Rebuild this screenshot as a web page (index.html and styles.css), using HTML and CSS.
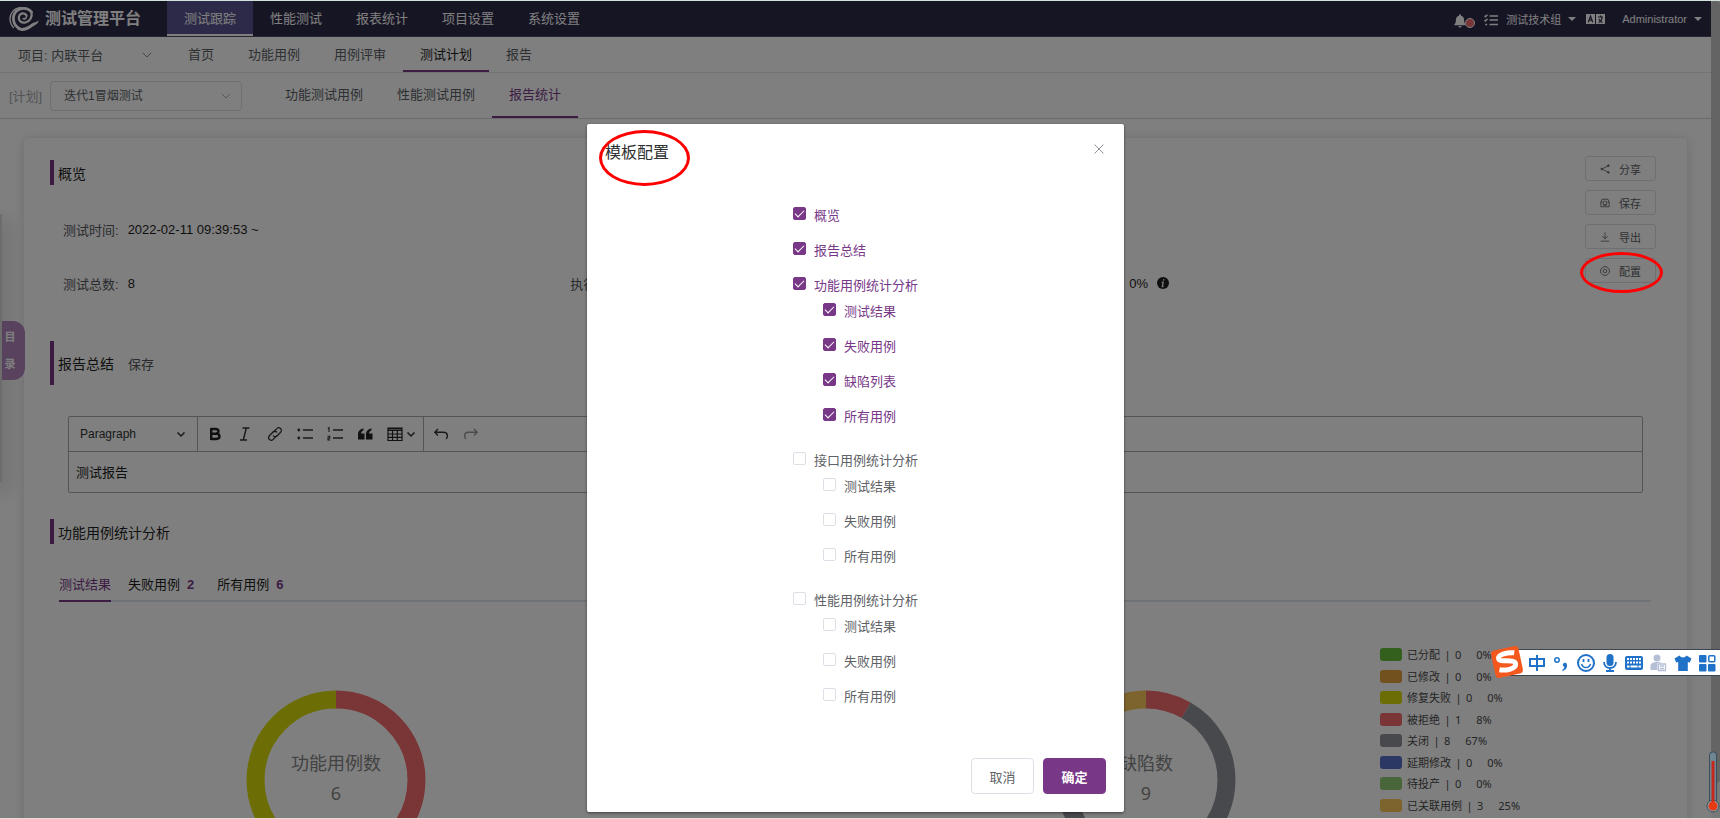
FILE: index.html
```html
<!DOCTYPE html>
<html lang="zh-CN">
<head>
<meta charset="utf-8">
<title>测试管理平台</title>
<link rel="stylesheet" href="styles.css">
</head>
<body>
<div class="page">
  <header class="topbar">
    <a class="brand" href="#">
      <svg class="brand-logo" viewBox="0 0 30 26" width="30" height="26" fill="none" stroke="#fff" stroke-linecap="round">
        <path d="M12 1.500C5 2 .8 7.500 1 13.500C1.200 17 2.500 19.500 4.500 21.500" stroke-width="1.300"/>
        <path d="M22.500 6C19 1.500 11 1 7 5.500C2.500 10.500 4 19.500 10.500 22.500" stroke-width="2.800"/>
        <path d="M17.500 9.500C16 6 11 7 10 10.500C9 14.500 12.500 17.500 16.500 16.500C21 15.300 23.500 11 22.500 6" stroke-width="2.200"/>
        <path d="M14.200 12.600C15.500 13.400 17.500 12.400 17.700 10" stroke-width="1.600"/>
        <path d="M8.500 21C14 23.500 19 20.500 22.500 17.800C25 16 27.500 16.300 29.800 14.500C28.800 18 26.500 18.600 24.200 20.300C19.500 24 14.500 26.800 8.500 23.500Z" fill="#fff" stroke="none"/>
      </svg>
      <span>测试管理平台</span>
    </a>
    <nav class="main-nav">
      <a class="main-tab active" href="#">测试跟踪</a>
      <a class="main-tab" href="#">性能测试</a>
      <a class="main-tab" href="#">报表统计</a>
      <a class="main-tab" href="#">项目设置</a>
      <a class="main-tab" href="#">系统设置</a>
    </nav>
    <div class="user-area">
      <button class="bell" aria-label="通知">
        <svg viewBox="0 0 12 14" width="12" height="14" fill="#fff"><path d="M6 .3a1 1 0 0 1 1 1v.5c2 .5 3.100 2.200 3.100 4.200 0 2.600.7 3.600 1.600 4.500v.8H.3v-.8C1.200 9.600 1.900 8.600 1.900 6c0-2 1.100-3.700 3.100-4.200v-.5a1 1 0 0 1 1-1zM4.500 12h3a1.500 1.500 0 0 1-3 0z"/></svg>
        <i class="bell-dot"></i>
      </button>
      <button class="tasks" aria-label="任务">
        <svg viewBox="0 0 14 12" width="14" height="12" fill="none" stroke="#fff" stroke-width="1.400"><path d="M5.500 2H14M5.500 6H14M5.500 10.500H14M.5 1.800l1 1 2-2.200M.5 5.900l1 1 2-2.200M1.200 10.500h2"/></svg>
      </button>
      <button class="menu-btn">测试技术组<i class="caret"></i></button>
      <button class="lang" aria-label="语言">
        <svg viewBox="0 0 19 10" width="19" height="10"><path fill="#fff" d="M0 0h9v10H0zM10 0h9v10h-9z"/><path fill="none" stroke="#2c2a48" stroke-width="1.200" d="M2.300 8.200 4.500 2 6.700 8.200M3 6.200h3M12 3h5M14.500 1.500V3M12.500 8.500C15 7.500 16 5.500 16 3M13 5c.7 1.700 2 3 3.500 3.500"/></svg>
      </button>
      <button class="menu-btn">Administrator<i class="caret"></i></button>
    </div>
  </header>

  <nav class="subbar">
    <button class="project">项目: 内联平台
      <svg viewBox="0 0 10 6" width="10" height="6" fill="none" stroke="#8a8d94"><path d="M.8.800 5 5 9.200.8"/></svg>
    </button>
    <a class="sub-tab" href="#">首页</a>
    <a class="sub-tab" href="#">功能用例</a>
    <a class="sub-tab" href="#">用例评审</a>
    <a class="sub-tab current" href="#">测试计划</a>
    <a class="sub-tab" href="#">报告</a>
  </nav>

  <div class="planbar">
    <label class="plan-label" for="plan">[计划]</label>
    <div class="plan-select">
      <select id="plan"><option>迭代1冒烟测试</option></select>
      <svg viewBox="0 0 10 6" width="10" height="6" fill="none" stroke="#a8abb2"><path d="M.8.800 5 5 9.200.8"/></svg>
    </div>
    <nav class="plan-tabs">
      <a class="sub-tab" href="#">功能测试用例</a>
      <a class="sub-tab" href="#">性能测试用例</a>
      <a class="sub-tab chosen" href="#">报告统计</a>
    </nav>
  </div>

  <main class="card">
    <section class="overview">
      <div class="overview-main">
        <h2 class="section-title">概览</h2>
        <dl class="facts">
          <div class="fact"><dt>测试时间:</dt><dd>2022-02-11 09:39:53 ~</dd></div>
          <div class="fact start"><dt>测试总数:</dt><dd>8</dd></div>
          <div class="fact"><dt>执行人:</dt><dd></dd></div>
          <div class="fact"><dt>通过率:</dt><dd>0%
            <svg class="info" viewBox="0 0 12 12" width="12" height="12"><circle cx="6" cy="6" r="6" fill="#1c1c1c"/><path d="M6.800 2.200 6.600 3.600M6.300 5 5.400 9.400M4.600 5.200h1.600M4.700 9.500h1.800" stroke="#fff" stroke-width="1.300" fill="none"/></svg>
          </dd></div>
        </dl>
      </div>
      <div class="actions">
        <button class="action">
          <svg viewBox="0 0 12 12" width="10" height="10" fill="#606266" stroke="#606266"><path d="M10 2 2.500 6 10 10" fill="none"/><circle cx="10" cy="2" r="1"/><circle cx="2" cy="6" r="1"/><circle cx="10" cy="10" r="1"/></svg>分享</button>
        <button class="action">
          <svg viewBox="0 0 12 12" width="10" height="10" fill="none" stroke="#606266"><path d="M1 5 2.500 1.500h7L11 5v5.500H1zM1 5h2M9 5h2"/><circle cx="6" cy="6" r="2.300"/><path d="M3.500 8.500h5"/></svg>保存</button>
        <button class="action">
          <svg viewBox="0 0 12 12" width="10" height="10" fill="none" stroke="#606266"><path d="M6 .5V8M2.800 5 6 8.200 9.200 5M.8 11h10.400"/></svg>导出</button>
        <button class="action">
          <svg viewBox="0 0 12 12" width="10" height="10" fill="none" stroke="#606266"><path d="M4 .8h4l1 1.500L11.300 4v4L9 9.700 8 11.200H4L3 9.700.7 8V4L3 2.300z"/><circle cx="6" cy="6" r="2.200"/></svg>配置</button>
      </div>
    </section>

    <h2 class="section-title tall">报告总结<button class="save-link">保存</button></h2>

    <div class="editor">
      <div class="toolbar">
        <button class="heading-pick">Paragraph
          <svg viewBox="0 0 10 10" width="10" height="10" fill="none" stroke="#333" stroke-width="1.500"><path d="M1.500 3.500 5 7l3.500-3.500"/></svg>
        </button>
        <div class="tools">
          <button class="tool" aria-label="粗体"><svg viewBox="0 0 16 16" width="16" height="16" fill="none" stroke="#222" stroke-width="2.400"><path d="M4.200 2v12M4 3h4.500c4 0 4 4.700 0 4.700H4.500h4.700c4.400 0 4.400 5.300 0 5.300H4"/></svg></button>
          <button class="tool" aria-label="斜体"><svg viewBox="0 0 16 16" width="16" height="16" fill="none" stroke="#333" stroke-width="1.400"><path d="M5.500 2h7M3 14h7M9.300 2 6.300 14"/></svg></button>
          <button class="tool" aria-label="链接"><svg viewBox="0 0 16 16" width="16" height="16" fill="none" stroke="#333" stroke-width="1.300" stroke-linecap="round"><path d="M6.200 6.200 9.800 2.600a2.500 2.500 0 0 1 3.800 3.600L10 10a2.500 2.500 0 0 1-3.700-.1M9.800 9.800 6.200 13.400a2.500 2.500 0 0 1-3.800-3.600L6 6a2.500 2.500 0 0 1 3.700.1"/></svg></button>
          <button class="tool" aria-label="项目列表"><svg viewBox="0 0 16 16" width="16" height="16" stroke="#333" stroke-width="1.400"><circle cx="1.800" cy="4" r="1.400" fill="#333" stroke="none"/><circle cx="1.800" cy="12" r="1.400" fill="#333" stroke="none"/><path d="M6 4h10M6 12h10"/></svg></button>
          <button class="tool" aria-label="编号列表"><svg viewBox="0 0 16 16" width="16" height="16" fill="none" stroke="#333" stroke-width="1.400"><path d="M6 4h10M6 12h10"/><path d="M.8 2.500 2 1.800V6M.5 10.300h2.200v1.800H1V14h2.200" stroke-width="1.100"/></svg></button>
          <button class="tool" aria-label="引用"><svg viewBox="0 0 16 16" width="16" height="16" fill="#222"><path d="M1 13.500V9c0-3.500 1.500-5.800 5.500-6.500v1.800C5 5 4.200 6 4 7.500h3.500v6zM9 13.500V9c0-3.500 1.500-5.800 5.500-6.500v1.800C13 5 12.200 6 12 7.500h3.500v6z"/></svg></button>
          <button class="tool table-tool" aria-label="表格"><svg viewBox="0 0 16 16" width="16" height="16" fill="none" stroke="#222" stroke-width="1.200"><path d="M1 2h14v12.500H1zM1 3h14M1 4.500h14M1 8h14M1 11.300h14M5.500 4.500v10M10.300 4.500v10"/></svg><svg viewBox="0 0 10 10" width="10" height="10" fill="none" stroke="#333" stroke-width="1.500"><path d="M1.500 3.500 5 7l3.500-3.500"/></svg></button>
        </div>
        <div class="tools history">
          <button class="tool" aria-label="撤销"><svg viewBox="0 0 16 16" width="16" height="16" fill="none" stroke="#333" stroke-width="1.400"><path d="M5 3 1.800 6.300 5 9.600M2 6.300h8.500c4.500 0 4.800 4.500 2.700 6.700"/></svg></button>
          <button class="tool" aria-label="重做"><svg viewBox="0 0 16 16" width="16" height="16" fill="none" stroke="#999" stroke-width="1.400"><path d="M11 3l3.200 3.300L11 9.600M14 6.300H5.500C1 6.300.7 10.800 2.800 13"/></svg></button>
        </div>
      </div>
      <div class="editor-body" contenteditable="true">测试报告</div>
    </div>

    <h2 class="section-title">功能用例统计分析</h2>
    <div class="result-tabs">
      <button class="result-tab on">测试结果</button>
      <button class="result-tab">失败用例<b>2</b></button>
      <button class="result-tab">所有用例<b>6</b></button>
    </div>

    <div class="charts">
      <div class="chart">
        <svg class="donut" viewBox="0 0 180 180" width="180" height="180">
          <g fill="none" stroke-width="18" transform="rotate(-90 90 90)">
            <circle cx="90" cy="90" r="80.500" pathLength="360" stroke="#f56c6c" stroke-dasharray="180 180"/>
            <circle cx="90" cy="90" r="80.500" pathLength="360" stroke="#dbdb0c" stroke-dasharray="180 180" stroke-dashoffset="-180"/>
          </g>
          <text class="donut-text" x="90" y="80">功能用例数</text>
          <text class="donut-text" x="90" y="110">6</text>
        </svg>
        <div class="legend short"><i class="swatch yellow"></i></div>
      </div>
      <div class="chart">
        <svg class="donut" viewBox="0 0 180 180" width="180" height="180">
          <g fill="none" stroke-width="18" transform="rotate(-90 90 90)">
            <circle cx="90" cy="90" r="80.500" pathLength="360" stroke="#f56c6c" stroke-dasharray="30 330"/>
            <circle cx="90" cy="90" r="80.500" pathLength="360" stroke="#909399" stroke-dasharray="240 120" stroke-dashoffset="-30"/>
            <circle cx="90" cy="90" r="80.500" pathLength="360" stroke="#fac858" stroke-dasharray="90 270" stroke-dashoffset="-270"/>
          </g>
          <text class="donut-text" x="90" y="80">缺陷数</text>
          <text class="donut-text" x="90" y="110">9</text>
        </svg>
        <ul class="legend">
          <li><i class="swatch green"></i>已分配<i class="bar">|</i>0<span class="pct">0%</span></li>
          <li><i class="swatch orange"></i>已修改<i class="bar">|</i>0<span class="pct">0%</span></li>
          <li><i class="swatch yellow"></i>修复失败<i class="bar">|</i>0<span class="pct">0%</span></li>
          <li><i class="swatch red"></i>被拒绝<i class="bar">|</i>1<span class="pct">8%</span></li>
          <li><i class="swatch gray"></i>关闭<i class="bar">|</i>8<span class="pct">67%</span></li>
          <li><i class="swatch blue"></i>延期修改<i class="bar">|</i>0<span class="pct">0%</span></li>
          <li><i class="swatch lime"></i>待投产<i class="bar">|</i>0<span class="pct">0%</span></li>
          <li><i class="swatch gold"></i>已关联用例<i class="bar">|</i>3<span class="pct">25%</span></li>
        </ul>
      </div>
    </div>
  </main>
</div>

<aside class="drawer-edge"></aside>
<button class="catalog">目<br>录</button>
<div class="scroll-track"><div class="scroll-thumb"></div></div>

<div class="mask">
  <form class="dialog" role="dialog" aria-labelledby="dialog-title">
    <div class="dialog-head">
      <h1 id="dialog-title">模板配置</h1>
      <button type="button" class="close" aria-label="关闭"><svg viewBox="0 0 10 10" width="10" height="10" stroke="#909399"><path d="M.5.500l9 9M9.500.500l-9 9"/></svg></button>
    </div>
    <ul class="tree">
      <li><label class="check"><input type="checkbox" checked>概览</label></li>
      <li><label class="check"><input type="checkbox" checked>报告总结</label></li>
      <li><label class="check"><input type="checkbox" checked>功能用例统计分析</label>
        <ul class="branch">
          <li><label class="check"><input type="checkbox" checked>测试结果</label></li>
          <li><label class="check"><input type="checkbox" checked>失败用例</label></li>
          <li><label class="check"><input type="checkbox" checked>缺陷列表</label></li>
          <li><label class="check"><input type="checkbox" checked>所有用例</label></li>
        </ul>
      </li>
      <li><label class="check"><input type="checkbox">接口用例统计分析</label>
        <ul class="branch">
          <li><label class="check"><input type="checkbox">测试结果</label></li>
          <li><label class="check"><input type="checkbox">失败用例</label></li>
          <li><label class="check"><input type="checkbox">所有用例</label></li>
        </ul>
      </li>
      <li><label class="check"><input type="checkbox">性能用例统计分析</label>
        <ul class="branch">
          <li><label class="check"><input type="checkbox">测试结果</label></li>
          <li><label class="check"><input type="checkbox">失败用例</label></li>
          <li><label class="check"><input type="checkbox">所有用例</label></li>
        </ul>
      </li>
    </ul>
    <div class="dialog-foot">
      <button type="button" class="btn">取消</button>
      <button type="button" class="btn primary">确定</button>
    </div>
    <i class="ring ring-title"></i>
  </form>
</div>
<i class="ring ring-config"></i>

<div class="ime">
  <svg class="ime-logo" viewBox="0 0 34 34" width="34" height="34">
    <g transform="rotate(-12 17 17)"><rect x="3" y="3" width="28" height="28" rx="4" fill="#f4581c"/><path d="M26 9.500C20 7.500 9.500 7.500 9.500 12C9.500 16.500 25 15 25 20.500C25 25.500 14 25.500 8 23" fill="none" stroke="#fff" stroke-width="5"/></g>
  </svg>
  <div class="ime-icons">
    <svg viewBox="0 0 18 18" width="18" height="18" fill="none" stroke="#2072c8" stroke-width="2"><path d="M2 5h14v7H2zM9 1v16"/></svg>
    <svg viewBox="0 0 18 18" width="18" height="18"><circle cx="5" cy="6" r="2.200" fill="none" stroke="#2072c8" stroke-width="1.500"/><path d="M10 16c2-1 2.500-2 2.200-3.200A2.100 2.100 0 1 1 15 11c.4 2.500-1.500 5.200-4.300 6z" fill="#2072c8"/></svg>
    <svg viewBox="0 0 18 18" width="18" height="18" fill="none" stroke="#2072c8" stroke-width="2"><circle cx="9" cy="9" r="8"/><path d="M4.500 10c1.500 4.800 7.500 4.800 9 0" stroke-width="1.500"/><path d="M6.500 5v3M11.500 5v3" stroke-width="1.800"/></svg>
    <svg viewBox="0 0 18 18" width="18" height="18"><rect x="5.500" y="0" width="7" height="12" rx="3.500" fill="#2072c8"/><path d="M3 8c0 8 12 8 12 0M9 13.500V17M5 17h8" fill="none" stroke="#2072c8" stroke-width="1.800"/></svg>
    <svg viewBox="0 0 18 18" width="18" height="18"><rect x="0" y="2" width="18" height="14" rx="2" fill="#2072c8"/><path d="M2 5h14M2 8.500h14" stroke="#fff" stroke-width="2" stroke-dasharray="2 1"/><path d="M2 12.500h2.500M5.500 12.500h7M13.500 12.500H16" stroke="#fff" stroke-width="1.800"/></svg>
    <svg viewBox="0 0 18 18" width="18" height="18" fill="#b5c0d6"><circle cx="8" cy="4" r="3.500"/><path d="M1.500 16V12c0-3 3-4 6.500-4 2 0 3.500.3 4.500 1H8.500v7z"/><path d="M9.500 10h7v6.500h-7zM11 12h4M11 14.500h4" fill="#fff" stroke="#b5c0d6" stroke-width="1.300"/></svg>
    <svg viewBox="0 0 18 18" width="18" height="18" fill="#2072c8"><path d="M5.500 1.500C7 4 11 4 12.500 1.500L17.500 4.500 15.800 8.500 13.800 8V17H4.200V8l-2 .5L.5 4.500z"/></svg>
    <svg viewBox="0 0 18 18" width="18" height="18" fill="#2072c8"><rect x="1" y="1" width="7.500" height="7.500" rx="1"/><rect x="1" y="10" width="7.500" height="7.500" rx="1"/><rect x="10" y="10" width="7.500" height="7.500" rx="1"/><rect x="10.800" y="1.800" width="6" height="6" rx="1" fill="none" stroke="#2072c8" stroke-width="1.500"/></svg>
  </div>
</div>
<svg class="thermo" viewBox="0 0 14 62" width="14" height="62">
  <rect x="3.500" y="1" width="7" height="54" rx="3" fill="#6e8593" stroke="#3e4e58"/>
  <circle cx="7" cy="55" r="6" fill="#8fa0aa" stroke="#3e4e58"/>
  <rect x="5.500" y="10" width="3" height="44" fill="#c8281c"/>
  <circle cx="7" cy="55" r="4.500" fill="#e63a12"/>
</svg>
</body>
</html>
```

FILE: styles.css
```css
* { box-sizing: border-box; }

body {
  margin: 0;
  height: 100vh;
  overflow: hidden;
  position: relative;
  background: #f0dcd6;
  border-top: 1px solid #d4e2dc;
  font-family: "Liberation Sans", "Noto Sans CJK SC", sans-serif;
  font-size: 13px;
  color: #303133;
}

h1, h2, ul, dl, dd { margin: 0; padding: 0; font-weight: 400; }
ul { list-style: none; }
a { color: inherit; text-decoration: none; }
i { font-style: normal; }
svg { flex: none; }
button, select {
  font: inherit;
  color: inherit;
  background: none;
  border: 0;
  padding: 0;
  margin: 0;
}

.page {
  height: calc(100vh - 2px);
  overflow: hidden;
  padding-right: 9px;
  background: #fff;
}

/* top bar */
.topbar {
  display: flex;
  height: 36px;
  background: #2c2a48;
  border-bottom: 1px solid #4a4a68;
  color: #fff;
}
.brand {
  display: flex;
  align-items: center;
  gap: 6px;
  width: 167px;
  padding-left: 9px;
  font-size: 16px;
  font-weight: 700;
}
.brand span { padding-bottom: 4px; }
.main-nav { display: flex; }
.main-tab {
  display: flex;
  align-items: center;
  padding: 0 17px;
  border-bottom: 2px solid transparent;
}
.main-tab.active { background: #595591; border-color: #fff; }
.user-area {
  display: flex;
  align-items: center;
  margin-left: auto;
  padding-right: 9px;
  font-size: 11px;
}
.bell { position: relative; height: 14px; margin: 5px 18px 0 0; }
.bell svg { display: block; }
.bell-dot {
  position: absolute;
  left: 11px;
  top: 4px;
  width: 10px;
  height: 10px;
  border: 1px solid #fff;
  border-radius: 50%;
  background: #f56c6c;
}
.tasks { margin-right: 8px; padding-top: 3px; }
.menu-btn { display: flex; align-items: center; gap: 7px; }
.caret { border: 4px solid transparent; border-top-color: #fff; border-bottom: 0; }
.lang { margin: 0 17px 0 10px; }
.lang svg, .tasks svg { display: block; }

/* project bar */
.subbar {
  display: flex;
  height: 36px;
  border-bottom: 1px solid #e6e6e6;
  color: #5c5f66;
}
.project {
  display: flex;
  align-items: center;
  justify-content: space-between;
  width: 171px;
  padding: 0 19px 0 18px;
}
.sub-tab {
  display: flex;
  align-items: center;
  padding: 0 17px;
  border-bottom: 2px solid transparent;
}
.sub-tab.current { color: #1d1e20; border-color: #783887; }
.sub-tab.chosen { color: #783887; border-color: #783887; }

/* plan bar */
.planbar {
  display: flex;
  align-items: center;
  height: 46px;
  padding-left: 9px;
  border-bottom: 1px solid #d4d4d4;
  color: #5c5f66;
}
.plan-label { width: 41px; color: #a5a8ae; }
.plan-select {
  display: flex;
  align-items: center;
  width: 192px;
  height: 30px;
  padding: 0 10px 0 13px;
  border: 1px solid #dcdfe6;
  border-radius: 4px;
}
.plan-select select { flex: 1; appearance: none; outline: 0; font-size: 12px; }
.plan-tabs { display: flex; align-self: stretch; margin-left: 26px; }
.plan-tabs .sub-tab { padding-bottom: 2px; }

/* report card */
.card {
  margin: 18px 23px 0;
  height: 900px;
  padding-top: 18px;
  border: 1px solid #ebeef5;
  border-radius: 4px;
  box-shadow: 0 2px 12px rgba(0, 0, 0, .12);
}
.overview { display: flex; padding: 0 31px 0 26px; }
.overview-main { flex: 1; padding-top: 4px; }
.overview .section-title { margin-left: 0; }
.section-title {
  display: flex;
  align-items: center;
  height: 25px;
  margin-left: 26px;
  padding-left: 4px;
  border-left: 4px solid #783887;
  font-size: 14px;
  color: #1d1e20;
}
.section-title.tall { height: 44px; margin-top: 48px; }
.save-link { margin-left: 14px; font-size: 13px; color: #55585e; }
.facts {
  display: grid;
  grid-template-columns: 1fr 1fr 1fr;
  row-gap: 34px;
  padding: 34px 0 0 13px;
}
.fact { display: flex; align-items: center; gap: 9px; height: 20px; }
.fact dt { color: #55585e; }
.fact dd { display: flex; align-items: center; gap: 9px; color: #1d1e20; }
.fact.start { grid-column: 1; }
.actions { display: flex; flex-direction: column; gap: 9px; }
.action {
  display: flex;
  align-items: center;
  justify-content: center;
  gap: 9px;
  width: 71px;
  height: 25px;
  border: 1px solid #dcdfe6;
  border-radius: 3px;
  font-size: 11px;
  color: #606266;
}

/* editor */
.editor {
  margin: 31px 44px 26px;
  border: 1px solid #aaa;
  border-radius: 2px;
}
.toolbar { display: flex; height: 35px; border-bottom: 1px solid #aaa; }
.heading-pick {
  display: flex;
  align-items: center;
  justify-content: space-between;
  width: 129px;
  padding: 0 11px;
  border-right: 1px solid #aaa;
  font-size: 12px;
}
.tools { display: flex; align-items: center; gap: 14px; padding: 0 7px 0 9px; border-right: 1px solid #aaa; }
.tools.history { border-right: 0; }
.tool { display: flex; align-items: center; }
.table-tool { gap: 3px; }
.editor-body { height: 40px; padding: 0 7px; line-height: 42px; color: #1d1e20; outline: 0; }

/* result tabs */
.result-tabs {
  display: flex;
  gap: 17px;
  margin: 22px 36px 0 35px;
  border-bottom: 2px solid #dfe4ed;
}
.result-tab {
  height: 36px;
  margin-bottom: -2px;
  border-bottom: 2px solid transparent;
  color: #1d1e20;
}
.result-tab.on { color: #783887; border-color: #783887; }
.result-tab b { margin: 0 6px 0 7px; color: #783887; }

/* charts */
.charts {
  display: grid;
  grid-template-columns: 1fr 1fr;
  column-gap: 28px;
  margin: 46px 36px 0 35px;
}
.chart { display: flex; padding-left: 187px; }
.donut { margin-top: 42px; }
.donut-text {
  font-family: "Noto Sans", "Noto Sans CJK SC", sans-serif;
  font-size: 18px;
  text-anchor: middle;
  fill: #868686;
}
.legend {
  display: grid;
  grid-auto-rows: 13px;
  height: 164px;
  align-content: space-between;
  margin-left: 144px;
  font-family: "Noto Sans", "Noto Sans CJK SC", sans-serif;
  font-size: 11px;
  line-height: 13px;
  color: #4a4a4a;
}
.legend.short { margin-left: 167px; align-content: end; }
.legend li { display: flex; align-items: center; }
.swatch { width: 22px; height: 13px; margin-right: 5px; border-radius: 3px; }
.bar { width: 15px; text-align: center; }
.pct { margin-left: 15px; }
.green { background: #67c23a; }
.orange { background: #e6a23c; }
.yellow { background: #dbdb0c; }
.red { background: #f56c6c; }
.gray { background: #909399; }
.blue { background: #5470c6; }
.lime { background: #91cc75; }
.gold { background: #fac858; }

/* side drawer and scrollbar */
.drawer-edge {
  position: absolute;
  left: 0;
  top: 213px;
  width: 2px;
  height: 268px;
  background: #d8d8d8;
  box-shadow: 0 8px 20px 4px rgba(0, 0, 0, .2);
}
.catalog {
  position: absolute;
  left: 2px;
  top: 320px;
  width: 23px;
  height: 59px;
  padding-right: 7px;
  border-radius: 0 12px 12px 0;
  background: #b085bb;
  color: #fff;
  font-size: 11px;
  font-weight: 700;
  line-height: 27px;
}
.scroll-track {
  position: absolute;
  right: 0;
  top: 0;
  bottom: 1px;
  width: 9px;
  background: #f1f1f1;
}
.scroll-thumb { height: 782px; border-radius: 4px; background: #c8c8c8; }

/* dialog */
.mask {
  position: absolute;
  inset: 0 0 1px;
  padding: 123px 9px 0 0;
  background: rgba(0, 0, 0, .5);
}
.dialog {
  position: relative;
  width: 537px;
  margin: 0 auto;
  padding: 18px;
  border-radius: 2px;
  background: #fff;
  box-shadow: 0 1px 3px rgba(0, 0, 0, .5);
}
.dialog-head { display: flex; align-items: flex-start; justify-content: space-between; height: 59px; }
.dialog-head h1 { font-size: 16px; line-height: 22px; color: #303133; }
.close { display: flex; padding: 2px; }
.tree { display: grid; row-gap: 9px; padding-left: 188px; }
.branch { display: grid; row-gap: 9px; padding: 0 0 9px 30px; }
.check { display: flex; align-items: flex-start; height: 26px; line-height: 29px; color: #606266; }
.check:has(input:checked) { color: #783887; }
.check input {
  appearance: none;
  display: grid;
  justify-content: center;
  width: 13px;
  height: 13px;
  margin: 6px 8px 0 0;
  border: 1px solid #dcdfe6;
  border-radius: 2px;
  background: #fff;
}
.check input:checked { background: #783887; border-color: #783887; }
.check input:checked::after {
  content: "";
  width: 4px;
  height: 8px;
  border: solid #fff;
  border-width: 0 1px 1px 0;
  transform: rotate(45deg);
}
.dialog-foot { display: flex; justify-content: flex-end; gap: 9px; padding-top: 41px; }
.btn {
  width: 63px;
  height: 36px;
  border: 1px solid #dcdfe6;
  border-radius: 4px;
  color: #606266;
}
.btn.primary { background: #783887; border-color: #783887; color: #fff; font-weight: 700; }

/* markers */
.ring { position: absolute; border: 3px solid #f00; border-radius: 50%; }
.ring-title { left: 12px; top: 6px; width: 91px; height: 56px; }
.ring-config { right: 57px; top: 251px; width: 83px; height: 41px; }

/* input method bar */
.ime {
  position: absolute;
  right: 0;
  top: 648px;
  width: 210px;
  height: 27px;
  background: #fff;
  border: solid #3c4450;
  border-width: 1px 0;
}
.ime-logo { position: absolute; left: -20px; top: -5px; }
.ime-icons { display: flex; align-items: center; justify-content: space-between; height: 100%; padding: 0 4px 0 18px; }
.thermo { position: absolute; right: 0; top: 750px; }
```
